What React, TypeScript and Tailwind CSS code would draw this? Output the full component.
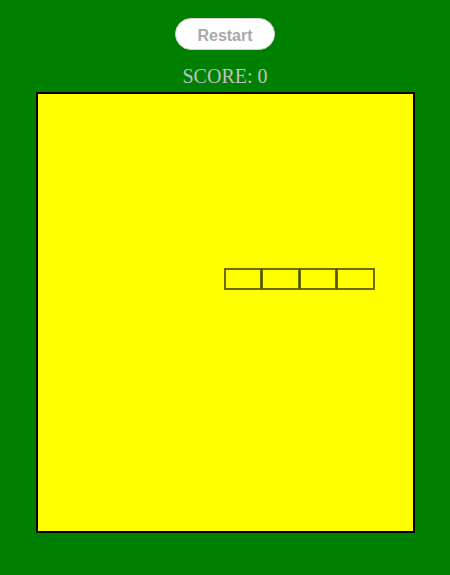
import React from "react";

const COLS = 10;
const ROWS = 20;
const snake = [
  { x: 5, y: 8 },
  { x: 6, y: 8 },
  { x: 7, y: 8 },
  { x: 8, y: 8 },
];

export default function App() {
  return (
    <div className="w-[450px] h-[575px] bg-[#008000] flex flex-col items-center">
      <button className="mt-[18px] w-[100px] h-[32px] pt-[3px] rounded-full bg-white border border-[#d4d4d4] text-[16px] font-bold text-[#a9a9a9] font-['Liberation_Sans',Arial,sans-serif]">
        Restart
      </button>
      <div className="mt-[15px] h-[22px] leading-[22px] text-[20px] text-[#c0c0c0] font-['Liberation_Serif','Times_New_Roman',serif]">
        SCORE: 0
      </div>
      <div className="mt-[5px] ml-[1px] w-[379px] h-[441px] border-2 border-black bg-[#ffff00] relative">
        {snake.map((s, i) => (
          <div
            key={i}
            className="absolute border-2 border-[#4a4a00]/80"
            style={{
              left: (s.x * 375) / COLS - 2,
              top: (s.y * 437) / ROWS - 1,
              width: 375 / COLS + 1,
              height: 437 / ROWS + 0.5,
            }}
          />
        ))}
      </div>
    </div>
  );
}
